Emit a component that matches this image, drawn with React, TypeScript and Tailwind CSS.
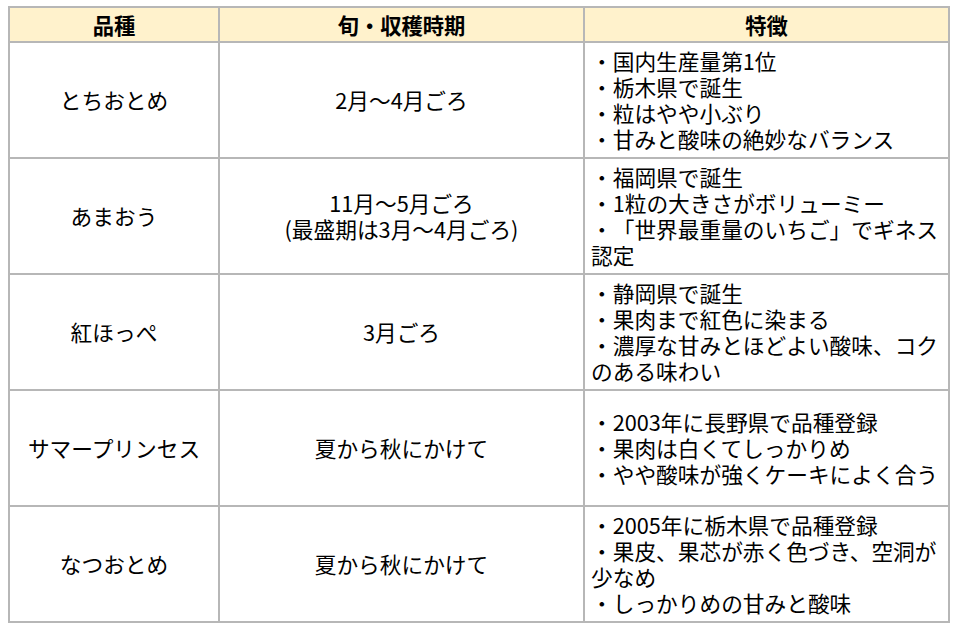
import React from "react";

const rows: { name: string; season: string[]; features: string[] }[] = [
  {
    name: "とちおとめ",
    season: ["2月～4月ごろ"],
    features: ["・国内生産量第1位", "・栃木県で誕生", "・粒はやや小ぶり", "・甘みと酸味の絶妙なバランス"],
  },
  {
    name: "あまおう",
    season: ["11月～5月ごろ", "(最盛期は3月～4月ごろ)"],
    features: ["・福岡県で誕生", "・1粒の大きさがボリューミー", "・「世界最重量のいちご」でギネス認定"],
  },
  {
    name: "紅ほっぺ",
    season: ["3月ごろ"],
    features: ["・静岡県で誕生", "・果肉まで紅色に染まる", "・濃厚な甘みとほどよい酸味、コクのある味わい"],
  },
  {
    name: "サマープリンセス",
    season: ["夏から秋にかけて"],
    features: ["・2003年に長野県で品種登録", "・果肉は白くてしっかりめ", "・やや酸味が強くケーキによく合う"],
  },
  {
    name: "なつおとめ",
    season: ["夏から秋にかけて"],
    features: ["・2005年に栃木県で品種登録", "・果皮、果芯が赤く色づき、空洞が少なめ", "・しっかりめの甘みと酸味"],
  },
];

export default function App() {
  return (
    <div
      className="w-[958px] h-[631px] bg-white pt-[6px] pl-[8px] text-black [text-spacing-trim:space-all]"
      style={{ fontFamily: '"Noto Sans CJK JP", "Noto Sans", sans-serif' }}
    >
      <div className="w-[942px] grid grid-cols-[210px_365px_365px] border-l-2 border-t-2 border-[#b7b7b7] text-[21.7px] leading-[26px]">
        {["品種", "旬・収穫時期", "特徴"].map((h) => (
          <div
            key={h}
            className="h-[35px] flex items-center justify-center bg-[#fff2cc] border-r-2 border-b-2 border-[#b7b7b7] font-bold text-[21.3px]"
          >
            {h}
          </div>
        ))}
        {rows.map((r) => (
          <React.Fragment key={r.name}>
            <div className="h-[116px] flex items-center justify-center border-r-2 border-b-2 border-[#b7b7b7]">
              {r.name}
            </div>
            <div className="h-[116px] flex flex-col items-center justify-center text-center border-r-2 border-b-2 border-[#b7b7b7]">
              {r.season.map((s) => (
                <div key={s}>{s}</div>
              ))}
            </div>
            <div className="h-[116px] flex flex-col justify-center pl-[6px] pr-[4px] border-r-2 border-b-2 border-[#b7b7b7]">
              {r.features.map((f) => (
                <div key={f}>{f}</div>
              ))}
            </div>
          </React.Fragment>
        ))}
      </div>
    </div>
  );
}
